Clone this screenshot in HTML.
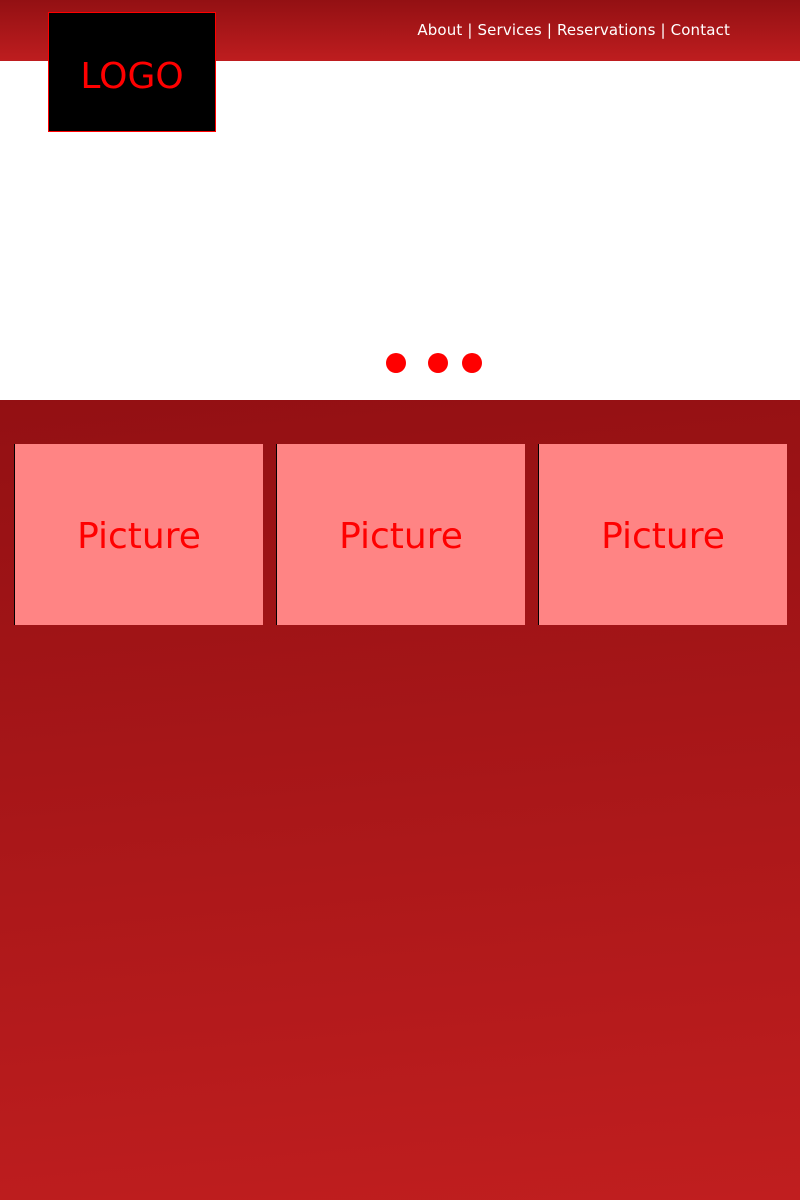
<!DOCTYPE html>
<html><head><style>
*{margin:0;padding:0;box-sizing:border-box}
body{width:800px;height:1200px;position:relative;background:#fff;font-family:"DejaVu Sans","Liberation Sans",sans-serif;overflow:hidden}
.hdr{position:absolute;left:0;top:0;width:800px;height:61px;background:linear-gradient(#931013,#be1d1f)}
.nav{position:absolute;right:70px;top:21px;color:#fff;font-size:15px;letter-spacing:0.15px}
.logo{position:absolute;left:48px;top:12px;width:168px;height:120px;background:#000;border:1px solid #f00;color:#f00;font-size:36px;text-align:center;line-height:128px}
.dot{position:absolute;top:353px;width:20px;height:20px;border-radius:50%;background:#f00}
.main{position:absolute;left:0;top:400px;width:800px;height:800px;background:linear-gradient(175deg,#931013,#c01e1f)}
.pic{position:absolute;top:44px;width:249px;height:181px;background:#ff8484;border-left:1px solid #000;color:#f00;font-size:36px;text-align:center;line-height:185px}
</style></head><body>
<div class="hdr"><div class="nav">About | Services | Reservations | Contact</div></div>
<div class="logo">LOGO</div>
<div class="dot" style="left:386px"></div>
<div class="dot" style="left:428px"></div>
<div class="dot" style="left:462px"></div>
<div class="main">
<div class="pic" style="left:14px">Picture</div>
<div class="pic" style="left:276px">Picture</div>
<div class="pic" style="left:538px">Picture</div>
</div>
</body></html>
